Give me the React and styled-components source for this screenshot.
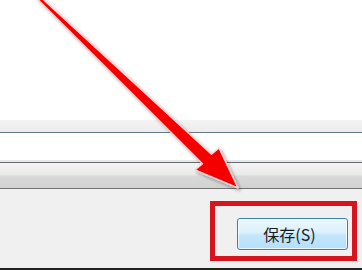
import React from "react"
import styled, { createGlobalStyle } from "styled-components"

const Global = createGlobalStyle`
  html, body {
    margin: 0;
    padding: 0;
    background: #ffffff;
  }
  body {
    font-family: "Noto Sans CJK SC", "Noto Sans", sans-serif;
  }
`

const Page = styled.div`
  position: relative;
  width: 362px;
  height: 270px;
  display: flex;
  flex-direction: column;
  overflow: hidden;
  background: #ffffff;
`

const Canvas = styled.div`
  height: 120px;
  background: #ffffff;
`

const Strip = styled.div`
  height: 12px;
  background: linear-gradient(#f3f3f3, #ececec);
  border-bottom: 1px solid #627b89;
`

const Field = styled.div`
  height: 27px;
  background: #ffffff;
  border-bottom: 2px solid #e4e9eb;
`

const Bar = styled.div`
  height: 25px;
  border-top: 1px solid #6a6a6a;
  border-bottom: 1px solid #747474;
  background: linear-gradient(#f3f4f3 0%, #e9ebea 45%, #d8d8d8 55%, #d2d2d2 100%);
`

const Footer = styled.div`
  flex: 1;
  display: flex;
  justify-content: flex-end;
  align-items: flex-start;
  background: #f0f0f0;
  border-bottom: 2px solid #202020;
`

const Highlight = styled.div`
  margin: 12px 5px 0 0;
  padding: 12px 4px 6px 22px;
  border: 5px solid #d7141d;
`

const Button = styled.button`
  width: 111px;
  height: 32px;
  display: flex;
  align-items: center;
  justify-content: center;
  padding: 0 6px 1px 0;
  border: 1px solid #3c7fb1;
  border-radius: 3px;
  background: linear-gradient(#ecf7fd 0%, #dcf0fc 45%, #c3e6fb 55%, #b5dffa 100%);
  box-shadow: inset 0 0 0 1px rgba(255, 255, 255, 0.7);
  font-family: "Noto Sans CJK SC", "Noto Sans", sans-serif;
  font-size: 16px;
  color: #1b1b1b;
`

const Arrow = styled.svg`
  position: absolute;
  left: 0;
  top: 0;
  pointer-events: none;
`

const App = () => (
  <>
    <Global />
    <Page>
      <Canvas />
      <Strip />
      <Field />
      <Bar />
      <Footer>
        <Highlight>
          <Button>保存(S)</Button>
        </Highlight>
      </Footer>
      <Arrow width="362" height="270" viewBox="0 0 362 270">
        <defs>
          <filter id="shade" x="-10%" y="-10%" width="130%" height="130%">
            <feDropShadow dx="2" dy="2" stdDeviation="1.5" floodColor="#000" floodOpacity="0.35" />
          </filter>
        </defs>
        {/* shaft tapers from the top-left corner into a broad head */}
        <polygon
          points="38.6,-4.8 211.5,154.3 219,148 238,188 195,170 202.5,163.7 36.2,-2.3"
          fill="#f40000"
          stroke="#fbd2d2"
          strokeWidth="1.5"
          strokeLinejoin="round"
          filter="url(#shade)"
        />
      </Arrow>
    </Page>
  </>
)

export default App
